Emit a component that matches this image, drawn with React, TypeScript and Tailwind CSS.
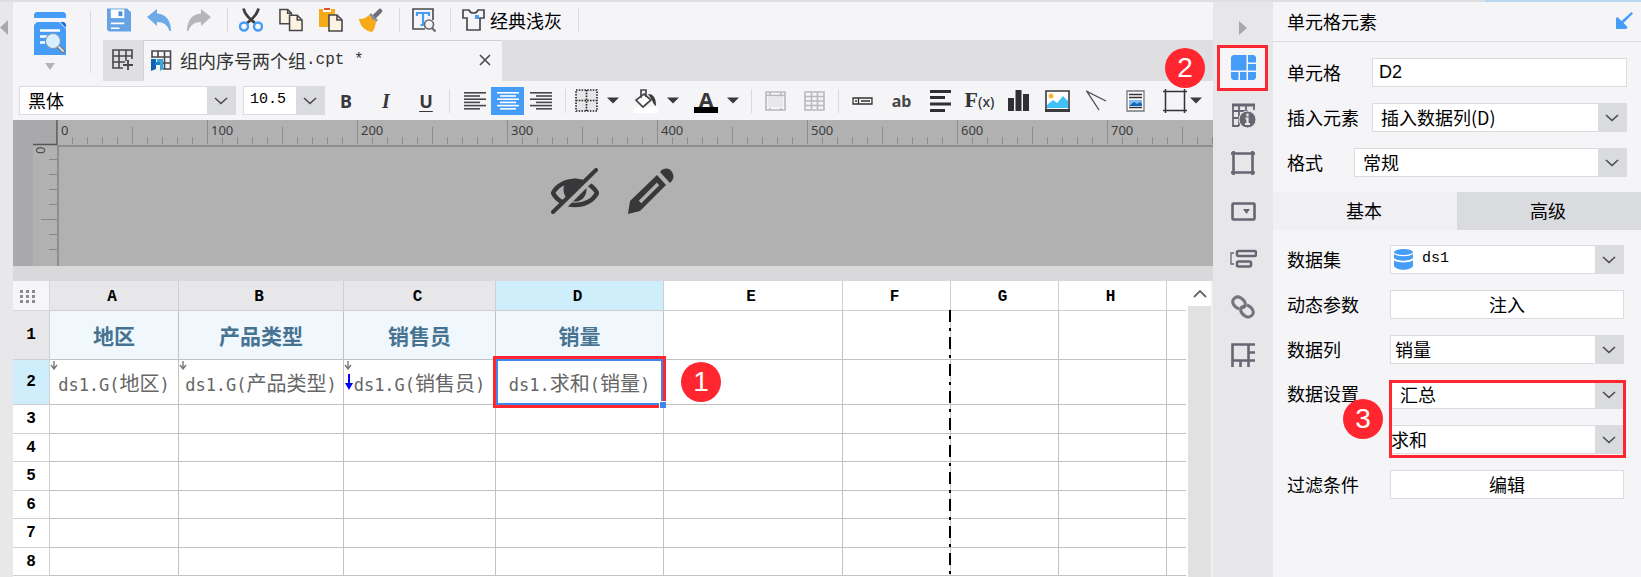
import React from 'react';
import { clsx } from 'clsx';

const mono = "font-['Liberation_Mono','Noto_Sans_CJK_SC',monospace]";

const columns = [
  { name: 'A', width: 'w-[129px]', head: '地区', formula: ['ds1.G(', '地区', ')'] },
  { name: 'B', width: 'w-[165px]', head: '产品类型', formula: ['ds1.G(', '产品类型', ')'] },
  { name: 'C', width: 'w-[152px]', head: '销售员', formula: ['ds1.G(', '销售员', ')'] },
  { name: 'D', width: 'w-[168px]', head: '销量', formula: ['ds1.', '求和', '(', '销量', ')'] },
  { name: 'E', width: 'w-[179px]' },
  { name: 'F', width: 'w-[108px]' },
  { name: 'G', width: 'w-[108px]' },
  { name: 'H', width: 'w-[108px]' },
  { name: '', width: 'w-auto' },
];

const emptyRows = [
  { n: 3, height: 'h-[29px]' },
  { n: 4, height: 'h-7' },
  { n: 5, height: 'h-[29px]' },
  { n: 6, height: 'h-7' },
  { n: 7, height: 'h-[29px]' },
  { n: 8, height: 'h-7' },
];

/* ---------- shared bits ---------- */

const Chevron = () => (
  <svg width="14" height="8" viewBox="0 0 14 8" fill="none" stroke="#4a4a4c" strokeWidth="1.6">
    <path d="M1 1l6 5.500l6-5.500" />
  </svg>
);

const Caret = () => (
  <svg width="12" height="7" viewBox="0 0 12 7" fill="#3a3a3c">
    <path d="M0 0.500h12L6 6.500z" />
  </svg>
);

const Divider = ({ className }: { className?: string }) => (
  <span className={clsx('w-px h-6 bg-[#d9d9dc] shrink-0', className)} />
);

const Badge = ({ n, className }: { n: number; className: string }) => (
  <span
    className={clsx(
      "absolute z-20 w-10 h-10 rounded-full bg-[#ff2630] text-white text-[28px] leading-10 text-center font-['Liberation_Sans',sans-serif]",
      className
    )}
  >
    {n}
  </span>
);

type SelectProps = {
  id: string;
  value: string;
  className?: string;
  textClass?: string;
  icon?: React.ReactNode;
};

const Select = ({ id, value, className, textClass = 'pl-2', icon }: SelectProps) => (
  <div className={clsx('relative flex h-[29px] bg-white border border-[#dcdce0]', className)}>
    {icon && <span className="flex items-center pl-[3px]">{icon}</span>}
    <select id={id} aria-label={value} className={clsx('appearance-none flex-1 min-w-0 pb-[2px] bg-transparent outline-none', textClass)}>
      <option>{value}</option>
    </select>
    <span className="w-7 bg-[#dadbde] flex items-center justify-center pointer-events-none">
      <Chevron />
    </span>
  </div>
);

/* ---------- main toolbar ---------- */

const PreviewIcon = () => (
  <svg width="32" height="43" viewBox="0 0 32 43">
    <path d="M2 0h28l2 2v4H0V2z" fill="#459df8" />
    <path d="M3 10h22l7 7v26H0V13z" fill="#459df8" />
    <path d="M26 10l6 6v-4l-2-2z" fill="#1b74d2" />
    <path d="M6 18.500h20M6 24.500h8M6 30.500h5" stroke="#fff" strokeWidth="2.500" />
    <path d="M24 34l5 5" stroke="#777" strokeWidth="4" strokeLinecap="round" />
    <path d="M24 34l5 5" stroke="#ddd" strokeWidth="2" strokeLinecap="round" />
    <circle cx="19" cy="29" r="7.500" fill="#d9eefc" stroke="#7f9bb5" strokeWidth="1.200" />
  </svg>
);

const SaveIcon = () => (
  <svg width="25" height="24" viewBox="0 0 25 24">
    <path d="M0 0h21l4 4v20H2l-2-2z" fill="#66a3e4" />
    <path d="M4 1h14v9H4z" fill="#fff" />
    <path d="M12 3h4v5h-4z" fill="#4a8fd8" />
    <path d="M4 15.500h14M4 20.500h9" stroke="#fff" strokeWidth="1.600" />
  </svg>
);

const UndoIcon = ({ color, flip }: { color: string; flip?: boolean }) => (
  <svg width="24" height="22" viewBox="0 0 24 22" className={flip ? '-scale-x-100' : ''}>
    <path d="M0 8L10 0v4.500c9 0.500 14 7 14 17.500h-1.500c-2-6-6-9-12.500-9V17z" fill={color} />
  </svg>
);

const CutIcon = () => (
  <svg width="24" height="24" viewBox="0 0 24 24" fill="none">
    <path d="M4.500 0.500c1 5 4 9 12 15M19.500 0.500c-1 5-4 9-12 15" stroke="#3f3f42" strokeWidth="2.800" />
    <circle cx="5" cy="18.500" r="4" stroke="#459df8" strokeWidth="2.400" />
    <circle cx="19" cy="18.500" r="4" stroke="#459df8" strokeWidth="2.400" />
  </svg>
);

const CopyIcon = () => (
  <svg width="25" height="24" viewBox="0 0 25 24" stroke="#48484b" strokeWidth="1.600">
    <path d="M1 1h8l4 4v11H1z" fill="#fdf3e2" />
    <path d="M9 1v4h4" fill="none" />
    <path d="M11 7h8l5 5v11H11z" fill="#fdf3e2" />
    <path d="M19 7v5h5" fill="none" />
  </svg>
);

const PasteIcon = () => (
  <svg width="24" height="24" viewBox="0 0 24 24">
    <path d="M0 1h16v18H0z" fill="#f6aa18" />
    <path d="M4 0h8v4H4z" fill="#fff" />
    <path d="M5 0h6v2H5z" fill="#e0522c" />
    <path d="M10 7h8l5 5v11H10z" fill="#fdf3e2" stroke="#48484b" strokeWidth="1.600" />
    <path d="M18 7v5h5" fill="none" stroke="#48484b" strokeWidth="1.600" />
  </svg>
);

const BrushIcon = () => (
  <svg width="24" height="24" viewBox="0 0 24 24">
    <path d="M21 3l-7 7" stroke="#6b6d78" strokeWidth="4.500" strokeLinecap="round" />
    <path d="M11 6l7 7" stroke="#8a8c96" strokeWidth="2.500" />
    <path d="M10 7l7 7c-1 5-2 8-4 10C6 23 1 18 0 11c4 0 7-1 10-4z" fill="#f6aa18" />
  </svg>
);

const FindIcon = () => (
  <svg width="24" height="24" viewBox="0 0 24 24" fill="none">
    <path d="M13 21H1V1h20v11" stroke="#4a4a4d" strokeWidth="1.600" />
    <path d="M5 8V5h12v3M11 5v12M8.500 17h5" stroke="#459df8" strokeWidth="2.200" />
    <circle cx="17" cy="16.500" r="4.500" fill="#f5f5f8" stroke="#6b6b6e" strokeWidth="1.700" />
    <path d="M20 20l3.500 3.500" stroke="#6b6b6e" strokeWidth="2.200" />
  </svg>
);

const ShirtIcon = () => (
  <svg width="23" height="24" viewBox="0 0 23 24">
    <path d="M1 2h6c1 4 8 4 9 0h6v8h-4v12H5V10H1z" fill="none" stroke="#4a4a4d" strokeWidth="1.700" />
    <path d="M13 7h4v4h-4z" fill="#459df8" />
  </svg>
);

const GridPlusIcon = () => (
  <svg width="22" height="22" viewBox="0 0 22 22" fill="none" stroke="#48484b" strokeWidth="1.600">
    <path d="M11 19H1V1h19v9M1 7h19M1 13h12M7 1v18M14 1v11" />
    <path d="M16 11v10M11 16h10" strokeWidth="1.800" />
  </svg>
);

const ReportIcon = () => (
  <svg width="21" height="21" viewBox="0 0 21 21" fill="none">
    <path d="M1 8V1h18.500v18H12M1 7h18M12 13h8M7 1v6M13.500 1v18" stroke="#48484b" strokeWidth="1.600" />
    <path d="M0 9h5v10l-5 2z" fill="#0d63ad" />
    <path d="M6 9h6v10l-3 2v-8H6z" fill="#35a6e0" />
    <path d="M4 12h5v3H4z" fill="#1a80c8" />
  </svg>
);

const IconButton = ({ label, children, className }: { label: string; children: React.ReactNode; className?: string }) => (
  <button aria-label={label} className={clsx('flex items-center justify-center shrink-0', className)}>
    {children}
  </button>
);

const MainToolbar = () => (
  <div className="flex">
    <div className="w-[77px] pt-[10px] flex justify-center pr-1">
      <button aria-label="预览" className="flex flex-col items-center gap-2 self-start">
        <PreviewIcon />
        <svg width="10" height="7" viewBox="0 0 10 7" fill="#b4b4b7">
          <path d="M0 0h10L5 7z" />
        </svg>
      </button>
    </div>
    <span className="w-px h-[62px] mt-[9px] bg-[#d9d9dc]" />
    <div className="flex-1 min-w-0 pl-3">
      <div className="h-[38px] pl-1 pb-[2px] flex items-center">
        <div className="flex gap-4">
          <IconButton label="保存" className="w-6"><SaveIcon /></IconButton>
          <IconButton label="撤销" className="w-6"><UndoIcon color="#6ea9e8" /></IconButton>
          <IconButton label="重做" className="w-6"><UndoIcon color="#b7b7ba" flip /></IconButton>
        </div>
        <Divider className="ml-4 mr-[11px]" />
        <div className="flex gap-4">
          <IconButton label="剪切" className="w-6"><CutIcon /></IconButton>
          <IconButton label="复制" className="w-6"><CopyIcon /></IconButton>
          <IconButton label="粘贴" className="w-6"><PasteIcon /></IconButton>
          <IconButton label="格式刷" className="w-6"><BrushIcon /></IconButton>
        </div>
        <Divider className="ml-4 mr-3" />
        <IconButton label="查找" className="w-6"><FindIcon /></IconButton>
        <Divider className="ml-[14px] mr-[11px]" />
        <button className="flex items-center gap-[5px]">
          <ShirtIcon />
          <span>经典浅灰</span>
        </button>
        <Divider className="ml-4" />
      </div>
      <div className="h-[41px] flex bg-[#dfdfe1]">
        <IconButton label="新建" className="w-10 pb-[2px]"><GridPlusIcon /></IconButton>
        <div className="w-[359px] bg-[#f5f5f8] border-l border-t border-[#d0d0d4] flex items-center pb-[2px] pl-[7px] pr-[11px] text-[#333]">
          <ReportIcon />
          <span className="ml-2">组内序号两个组</span>
          <span className={clsx('text-[16px] whitespace-pre', mono)}>.cpt *</span>
          <button aria-label="关闭" className="ml-auto">
            <svg width="12" height="12" viewBox="0 0 12 12" stroke="#4a4a4d" strokeWidth="1.600">
              <path d="M1 1l10 10M11 1L1 11" />
            </svg>
          </button>
        </div>
      </div>
    </div>
  </div>
);

/* ---------- format bar ---------- */

const AlignIcon = ({ align, color }: { align: 'left' | 'center' | 'right'; color: string }) => {
  const widths = [22, 16, 22, 16, 22, 16];
  return (
    <svg width="22" height="18" viewBox="0 0 22 18" fill={color}>
      {widths.map((w, i) => (
        <rect
          key={i}
          x={align === 'left' ? 0 : align === 'right' ? 22 - w : (22 - w) / 2}
          y={i * 3.2}
          width={w}
          height="1.600"
        />
      ))}
    </svg>
  );
};

const BordersIcon = () => (
  <svg width="23" height="23" viewBox="0 0 23 23">
    <path d="M1 1h21v21H1z" fill="#e6e6e8" />
    <path d="M1 1h21v21H1zM11.500 1v21M1 11.500h21" fill="none" stroke="#222" strokeWidth="1.600" strokeDasharray="1.500 1.300" />
  </svg>
);

const BucketIcon = () => (
  <svg width="24" height="24" viewBox="0 0 24 24">
    <path d="M0 18h24v6H0z" fill="#fff" />
    <path d="M10 5l7 6-8 7-7-7z" fill="#fff" stroke="#48484b" strokeWidth="1.700" />
    <path d="M7 9V1h5v7" fill="none" stroke="#48484b" strokeWidth="1.700" />
    <path d="M14 5c5 0 8 3 8 12c-2-1-3-3-4-6z" fill="#3a3a3c" />
  </svg>
);

const MergeIcon = () => (
  <svg width="21" height="20" viewBox="0 0 21 20" fill="none" stroke="#b9b9bc" strokeWidth="1.600">
    <path d="M3 6h15v10H3z" fill="#e8e8ea" stroke="none" />
    <path d="M1 1h19v18H1zM1 4.500h19M5 1v3M16 1v3M5 17v2M16 17v2" />
  </svg>
);

const UnmergeIcon = () => (
  <svg width="21" height="20" viewBox="0 0 21 20" fill="none" stroke="#b9b9bc" strokeWidth="1.600">
    <path d="M1 1h19v18H1zM1 5.500h19M1 10h19M1 14.500h19M7.500 1v18M13.500 1v18" />
  </svg>
);

const WidgetIcon = () => (
  <svg width="21" height="8" viewBox="0 0 21 8" fill="none" stroke="#333" strokeWidth="1.300">
    <path d="M1 1h19v6H1zM6.500 1v6M3 4h2M9 4h9" />
  </svg>
);

const TextLinesIcon = () => (
  <svg width="21" height="22" viewBox="0 0 21 22" fill="#303032">
    <path d="M0 0h21v3H0zM0 6h15v3H0zM0 12.500h21v3H0zM0 19h15v3H0z" />
  </svg>
);

const ChartIcon = () => (
  <svg width="21" height="21" viewBox="0 0 21 21" fill="#303032">
    <path d="M0 8h6v13H0zM7.500 0h6v21h-6zM15 4h6v17h-6z" />
  </svg>
);

const ImageIcon = () => (
  <svg width="25" height="22" viewBox="0 0 25 22">
    <path d="M1 1h23v19H1z" fill="#fff" stroke="#3a3a3c" strokeWidth="1.600" />
    <circle cx="6" cy="6" r="2.500" fill="#f8b62c" />
    <path d="M2 18v-3l6-5 4 3 6-7 5 5v7z" fill="#41c1f7" />
    <path d="M0 19h25v3H0z" fill="#3a3a3c" />
  </svg>
);

const SlashIcon = () => (
  <svg width="21" height="21" viewBox="0 0 21 21" fill="none" stroke="#4a4a4d" strokeWidth="1.300">
    <path d="M20 11L1 1.500l12 18.500" />
  </svg>
);

const SubReportIcon = () => (
  <svg width="19" height="22" viewBox="0 0 19 22" fill="none">
    <path d="M1 1h17v20H1z" stroke="#77777b" strokeWidth="1.300" fill="#fff" />
    <path d="M3 4.500h13M3 7.500h13M3 17.500h13" stroke="#333" strokeWidth="1.500" />
    <path d="M3 10h13v6H3z" fill="#7fbcf8" />
    <path d="M3 16l5-4 3 2 3-2 2 2v2z" fill="#1565b5" />
  </svg>
);

const FrameIcon = ({ size, color, weight }: { size: number; color: string; weight: number }) => (
  <svg width={size} height={size} viewBox="0 0 24 24" fill="none" stroke={color} strokeWidth={weight}>
    <path d="M2.500 0v24M21.500 0v24M0 2.500h24M0 21.500h24" />
  </svg>
);

const tools = [
  { label: '控件', icon: <WidgetIcon /> },
  { label: '普通文本', icon: <span className="text-[16px] font-bold text-[#48484b] font-['Noto_Sans',sans-serif]">ab</span> },
  { label: '富文本', icon: <TextLinesIcon /> },
  {
    label: '公式',
    icon: (
      <span className="text-[#333] font-bold text-[22px] font-['Liberation_Serif',serif]">
        F<span className="text-[14px] font-['Noto_Sans',sans-serif] font-medium">(x)</span>
      </span>
    ),
  },
  { label: '图表', icon: <ChartIcon /> },
  { label: '图片', icon: <ImageIcon /> },
  { label: '斜线', icon: <SlashIcon /> },
  { label: '子报表', icon: <SubReportIcon /> },
  { label: '悬浮元素', icon: <FrameIcon size={24} color="#333" weight={1.5} /> },
];

const FormatBar = () => (
  <div className="h-[39px] pl-[6px] flex items-center">
    <Select id="font" value="黑体" className="w-[217px]" />
    <Select id="size" value="10.5" className="w-[82px] ml-[7px]" textClass={clsx('pl-[6px] text-[15px]', mono)} />
    <div className="flex ml-px text-[18px] text-[#38383a]">
      <button className="w-10 font-bold font-['Noto_Sans',sans-serif]">B</button>
      <button className="w-10 font-bold italic text-[20px] font-['Liberation_Serif',serif]">I</button>
      <button className="w-10 font-bold underline underline-offset-3 font-['Noto_Sans',sans-serif]">U</button>
    </div>
    <Divider className="ml-[3px] mr-2" />
    <IconButton label="左对齐" className="w-[33px] h-7"><AlignIcon align="left" color="#48484b" /></IconButton>
    <IconButton label="居中" className="w-[33px] h-7 bg-[#459df8]"><AlignIcon align="center" color="#fff" /></IconButton>
    <IconButton label="右对齐" className="w-[33px] h-7"><AlignIcon align="right" color="#48484b" /></IconButton>
    <Divider className="ml-2 mr-[6px]" />
    <IconButton label="边框" className="w-7"><BordersIcon /></IconButton>
    <IconButton label="边框选项" className="w-[26px] mr-[6px]"><Caret /></IconButton>
    <IconButton label="填充" className="w-7"><BucketIcon /></IconButton>
    <IconButton label="填充选项" className="w-[26px] mr-[6px]"><Caret /></IconButton>
    <button aria-label="字体颜色" className="w-7 flex flex-col items-center">
      <span className="text-[22px] leading-5 h-[18px] font-bold text-[#38383a] font-['Noto_Sans',sans-serif]">A</span>
      <span className="w-6 h-[6px] bg-black" />
    </button>
    <IconButton label="字体颜色选项" className="w-[26px]"><Caret /></IconButton>
    <Divider className="ml-[5px] mr-1" />
    <IconButton label="合并单元格" className="w-[39px]"><MergeIcon /></IconButton>
    <IconButton label="取消合并" className="w-[39px]"><UnmergeIcon /></IconButton>
    <Divider className="ml-1 mr-1" />
    {tools.map((tool) => (
      <IconButton key={tool.label} label={tool.label} className="w-[39px]">{tool.icon}</IconButton>
    ))}
    <IconButton label="更多" className="-ml-1"><Caret /></IconButton>
  </div>
);

/* ---------- ruler + parameter pane ---------- */

// one tick every 15px, a labelled one every ten
const ticks = Array.from({ length: 78 }, (_, i) => i);

const ParameterPane = () => (
  <div className="h-[146px] flex bg-[#b1b1b1]">
    <svg className="w-11 h-full shrink-0" viewBox="0 0 44 146">
      <path d="M0 0h44v25H0zM0 25h20v121H0z" fill="#a9a9ac" />
      <path d="M20 24.500h24M44 0v24" stroke="#555" strokeWidth="1.500" />
      {[1, 2, 3, 4, 5, 6, 7].map((i) => (
        <path key={i} d={`M${i === 5 ? 28 : 36} ${24.5 + i * 15}h8`} stroke="#888" />
      ))}
      <path d="M36 99.500h8" stroke="#888" />
      <text x="-34" y="32" transform="rotate(-90)" fontSize="13" fontFamily="Noto Sans" fill="#444">0</text>
    </svg>
    <div className="flex-1 min-w-0 flex flex-col">
      <svg className="w-full h-[25px] shrink-0 border-l border-[#777]">
        {ticks.map((i) => (
          <path
            key={i}
            d={i % 10 === 0 ? `M${i * 15 - 0.5} 0v24` : i % 5 === 0 ? `M${i * 15 - 0.5} 7v17` : `M${i * 15 - 0.5} 17v7`}
            stroke="#8c8c8c"
          />
        ))}
        {[0, 100, 200, 300, 400, 500, 600, 700].map((n) => (
          <text key={n} x={n * 1.5 + 3} y="15" fontSize="13" fontFamily="Noto Sans" fill="#3c3c3c">{n}</text>
        ))}
      </svg>
      <div className="flex-1 border-t-2 border-l-2 border-[#8e8e8e] pl-[492px] pt-[21px] flex items-start gap-[29px]">
        <button aria-label="隐藏">
          <svg width="48" height="46" viewBox="0 0 48 46" fill="none">
            <path d="M2 25C10 9 38 9 46 25C38 41 10 41 2 25z" stroke="#38383a" strokeWidth="4.500" strokeLinejoin="round" />
            <circle cx="24" cy="22" r="11.500" fill="#38383a" />
            <path d="M5 47L49 3" stroke="#b1b1b1" strokeWidth="5" />
            <path d="M2 44L45 2" stroke="#38383a" strokeWidth="4" strokeLinecap="round" />
          </svg>
        </button>
        <button aria-label="编辑参数面板">
          <svg width="46" height="46" viewBox="0 0 46 46">
            <path d="M0 46l2-13L29 7l9 10L12 43z" fill="#38383a" />
            <path d="M12 34l18-18" stroke="#b1b1b1" strokeWidth="3.500" />
            <path d="M32 4c4-5 10-4 12 0c3 5 1 8-2 11z" fill="#38383a" />
          </svg>
        </button>
      </div>
    </div>
  </div>
);

/* ---------- sheet ---------- */

const Formula = ({ parts }: { parts: string[] }) => (
  <span className="whitespace-nowrap leading-6">
    {parts.map((part, i) => (
      <span key={i} className={/[a-z().]/.test(part) ? "text-[17px] font-['DejaVu_Sans_Mono',monospace]" : 'text-[20px]'}>
        {part}
      </span>
    ))}
  </span>
);

const ExpandArrow = () => (
  <svg className="absolute left-0 top-[1px]" width="8" height="9" viewBox="0 0 8 9" fill="none" stroke="#777" strokeWidth="1.400">
    <path d="M4 0v8M1 4l3 4l3-4" />
  </svg>
);

const cell = 'relative border-r border-b border-[#c2c2c2] p-0 text-center';
const rowHead = clsx('border-r border-b border-[#d0d0d2] p-0 text-[16px]', mono);

const Sheet = () => (
  <div className="flex flex-1">
    <div className="relative flex-1 min-w-0 bg-white pr-[2px]">
      <table className="w-full table-fixed border-separate border-spacing-0 leading-5">
        <colgroup>
          <col className="w-[37px]" />
          {columns.map((c) => <col key={c.name} className={c.width} />)}
        </colgroup>
        <thead>
          <tr className={clsx('h-[30px] text-[16px]', mono)}>
            <th className="bg-[#f6f6f8] border-r border-b border-[#d8d8da] p-0">
              <svg width="16" height="13" viewBox="0 0 16 13" fill="#8c8c8f" className="ml-[7px] mt-px">
                {[0, 6, 12].map((x) => [0, 5, 10].map((y) => <rect key={`${x}-${y}`} x={x} y={y} width="3" height="3" />))}
              </svg>
            </th>
            {columns.map((c) => (
              <th
                key={c.name}
                className={clsx(
                  'border-r border-b border-[#cfcfd1] p-0 pt-[2px] pr-1 font-bold',
                  c.name === 'D' ? 'bg-[#cdeefa]' : c.head ? 'bg-[#e7e7e9]' : 'bg-white',
                  c.name === '' && 'border-r-0'
                )}
              >
                {c.name}
              </th>
            ))}
          </tr>
        </thead>
        <tbody>
          <tr className="h-[49px]">
            <th className={clsx('bg-[#e7e7e9]', rowHead)}>1</th>
            {columns.map((c) => (
              <td key={c.name} className={clsx(cell, 'text-[21px] font-bold text-[#457391]', c.head && 'bg-[#f0f8fe]', c.name === '' && 'border-r-0')}>
                {c.head}
              </td>
            ))}
          </tr>
          <tr className="h-[45px]">
            <th className={clsx('bg-[#cdeefa]', rowHead)}>2</th>
            {columns.map((c) => (
              <td key={c.name} className={clsx(cell, 'pt-1 text-[#666]', c.name === '' && 'border-r-0')}>
                {c.formula && <Formula parts={c.formula} />}
                {c.formula && c.name !== 'D' && <ExpandArrow />}
                {c.name === 'C' && (
                  <svg className="absolute left-[1px] top-[14px]" width="8" height="16" viewBox="0 0 8 16" fill="#00f">
                    <path d="M3 0h2v9h3l-4 7l-4-7h3z" />
                  </svg>
                )}
                {c.name === 'D' && (
                  <div className="absolute z-10 -left-[3px] -right-[3px] -top-1 -bottom-1 border-[3px] border-[#ff2630]">
                    <div className="h-full border-2 border-[#3d87ea]" />
                    <span className="absolute -right-[3px] -bottom-[3px] w-[7px] h-[7px] bg-[#3d87ea] border-l border-t border-white" />
                  </div>
                )}
                {c.name === 'E' && <Badge n={1} className="left-[17px] top-[2px]" />}
              </td>
            ))}
          </tr>
          {emptyRows.map((row) => (
            <tr key={row.n} className={row.height}>
              <th className={clsx('bg-white', rowHead)}>{row.n}</th>
              {columns.map((c) => <td key={c.name} className={clsx(cell, c.name === '' && 'border-r-0')} />)}
            </tr>
          ))}
        </tbody>
      </table>
      {/* page break */}
      <svg className="absolute left-[936px] top-[29px] w-[2px] h-[266px]">
        <path d="M1 0v266" stroke="#000" strokeWidth="2" strokeDasharray="12 6 3 6" />
      </svg>
    </div>
    <div className="w-[25px] bg-[#e1e1e1] border-r-2 border-[#f0f0f2]">
      <button aria-label="向上滚动" className="w-full h-[25px] bg-white flex items-center justify-center">
        <svg width="14" height="8" viewBox="0 0 14 8" fill="none" stroke="#666" strokeWidth="1.800">
          <path d="M1 7l6-6l6 6" />
        </svg>
      </button>
    </div>
  </div>
);

/* ---------- side bar ---------- */

const sideIcons = [
  {
    label: '单元格元素',
    icon: (
      <svg width="25" height="25" viewBox="0 0 25 25" fill="#459df8">
        <path d="M2 0h13.500v15.500H0V2zM17 0h6l2 2v5.500h-8zM17 9h8v6.500h-8zM0 17h7.500v8H2l-2-2zM9 17h6.500v8H9zM17 17h8v6l-2 2h-6z" />
      </svg>
    ),
  },
  {
    label: '单元格属性',
    icon: (
      <svg width="25" height="25" viewBox="0 0 25 25" fill="none">
        <path d="M8 23H2V2h21v5M8 2v21M2 8h15M2 15h7M15 2v6" stroke="#666672" strokeWidth="1.800" />
        <path d="M1 2h23" stroke="#666672" strokeWidth="3" />
        <circle cx="16.500" cy="16.500" r="8.500" fill="#666672" stroke="#e7e7ea" />
        <path d="M16.500 10.500v3M14.500 15.500h2v5M14 21h5" stroke="#e7e7ea" strokeWidth="2.200" />
      </svg>
    ),
  },
  { label: '悬浮元素', icon: <FrameIcon size={24} color="#666672" weight={2.6} /> },
  {
    label: '控件设置',
    icon: (
      <svg width="25" height="19" viewBox="0 0 25 19">
        <rect x="1.500" y="1.500" width="22" height="16" rx="1" fill="none" stroke="#666672" strokeWidth="2.600" />
        <path d="M12 7h7l-3.500 5z" fill="#666672" />
      </svg>
    ),
  },
  {
    label: '条件属性',
    icon: (
      <svg width="27" height="20" viewBox="0 0 27 20" fill="none" stroke="#666672">
        <path d="M4 4H1v11h3" strokeWidth="1.300" />
        <rect x="7" y="2" width="19" height="5" rx="1.500" strokeWidth="2.600" />
        <rect x="7" y="12.500" width="14" height="5" rx="1.500" strokeWidth="2.600" />
      </svg>
    ),
  },
  {
    label: '超级链接',
    icon: (
      <svg width="24" height="24" viewBox="0 0 24 24" fill="none" stroke="#74747f" strokeWidth="3">
        <path d="M8 14C3 12 1 8 2 5c2-3 5-4 8-2c3 2 5 5 4 8c-1 2-3 2-4 1" />
        <path d="M16 10c5 2 7 6 6 9c-2 3-5 4-8 2c-3-2-5-5-4-8c1-2 3-2 4-1" />
      </svg>
    ),
  },
  {
    label: '权限',
    icon: (
      <svg width="25" height="25" viewBox="0 0 25 25" fill="none" stroke="#666672" strokeWidth="2.600">
        <path d="M1.500 24V1.500H24M1.500 17.500H24M17.500 1.500V24M9.500 17.500V24M17.500 9.500H24" />
      </svg>
    ),
  },
];

const SideBar = () => (
  <nav className="relative w-[60px] shrink-0 bg-[#e7e7ea] border-t-2 border-[#dfdfe1]">
    <button aria-label="展开" className="h-[41px] w-full flex items-end justify-center pb-2">
      <svg width="8" height="14" viewBox="0 0 8 14" fill="#a9a9ac">
        <path d="M0 0l8 7l-8 7z" />
      </svg>
    </button>
    {sideIcons.map((item, i) => (
      <IconButton key={item.label} label={item.label} className="relative w-full h-12">
        {i === 0 && <span className="absolute left-1 right-[5px] top-[2px] bottom-0 bg-[#f5f5f8] border-[3px] border-[#ff2630]" />}
        <span className="relative">{item.icon}</span>
      </IconButton>
    ))}
    <Badge n={2} className="-left-12 top-[46px]" />
  </nav>
);

/* ---------- property panel ---------- */

const DatabaseIcon = () => (
  <svg width="19" height="21" viewBox="0 0 19 21" fill="#459df8">
    <ellipse cx="9.500" cy="3" rx="9.500" ry="3" />
    <path d="M0 5c4 3 15 3 19 0v4c-4 3.500-15 3.500-19 0z" />
    <path d="M0 11c4 3 15 3 19 0v6c-3 5-16 5-19 0z" />
    <path d="M0 10.500c4 3 15 3 19 0" fill="none" stroke="#fff" strokeWidth="1.200" />
  </svg>
);

const Field = ({ id, label, labelWidth = 'w-[102px]', children }: { id: string; label: string; labelWidth?: string; children: React.ReactNode }) => (
  <div className="flex items-center h-[29px]">
    <label htmlFor={id} className={clsx('shrink-0 whitespace-nowrap pb-[2px]', labelWidth)}>{label}</label>
    {children}
  </div>
);

const PropertyPanel = () => (
  <aside className="w-[368px] shrink-0 bg-[#f5f5f8]">
    <div className="flex h-[2px] bg-[#dfdfe1]">
      <span className="ml-auto w-[156px] bg-[#b8d8f0]" />
    </div>
    <header className="h-10 pl-[14px] pr-2 pb-[2px] flex items-center justify-between border-b border-[#dcdce0]">
      <h2>单元格元素</h2>
      <button aria-label="停靠">
        <svg width="17" height="17" viewBox="0 0 17 17" fill="#459df8">
          <path d="M15.500 0L17 1.500L7.500 11l4 4l-1 2H0V6l1.500-1l4 4z" />
        </svg>
      </button>
    </header>
    <div className="px-[14px] pt-4 flex flex-col gap-4">
      <Field id="cell" label="单元格" labelWidth="w-[85px]">
        <input id="cell" defaultValue="D2" className="flex-1 min-w-0 h-full bg-white border border-[#dcdce0] px-[6px] outline-none font-['Liberation_Sans',sans-serif]" />
      </Field>
      <Field id="element" label="插入元素" labelWidth="w-[85px]">
        <Select id="element" value="插入数据列(D)" className="flex-1" />
      </Field>
      <Field id="format" label="格式" labelWidth="w-[67px]">
        <Select id="format" value="常规" className="flex-1" />
      </Field>
    </div>
    <div role="tablist" className="flex h-[38px] mt-[15px]">
      <button role="tab" aria-selected="true" className="flex-1 pb-[2px] pr-[2px] bg-[#f0f0f3]">基本</button>
      <button role="tab" aria-selected="false" className="flex-1 pb-[2px] pr-[2px] bg-[#dadbde]">高级</button>
    </div>
    <div className="pl-[14px] pr-[17px] pt-[15px] flex flex-col gap-4">
      <Field id="dataset" label="数据集" labelWidth="w-[103px]">
        <Select id="dataset" value="ds1" className="flex-1" textClass={clsx('pl-[9px] text-[15px]', mono)} icon={<DatabaseIcon />} />
      </Field>
      <Field id="params" label="动态参数" labelWidth="w-[103px]">
        <button id="params" className="flex-1 h-full pb-[2px] bg-white border border-[#dcdce0]">注入</button>
      </Field>
      <Field id="column" label="数据列" labelWidth="w-[103px]">
        <Select id="column" value="销量" className="flex-1" textClass="pl-1" />
      </Field>
      <div className="relative flex items-start">
        <label htmlFor="setting" className="w-[103px] leading-[27px]">数据设置</label>
        <div className="flex-1 flex flex-col gap-4">
          <Select id="setting" value="汇总" textClass="pl-[9px]" />
          <Select id="aggregate" value="求和" textClass="pl-0" />
        </div>
        <span className="absolute left-[102px] -right-[2px] top-0 -bottom-1 border-[3px] border-[#ff2630] pointer-events-none" />
        <Badge n={3} className="left-14 top-[19px]" />
      </div>
      <Field id="filter" label="过滤条件" labelWidth="w-[103px]">
        <button id="filter" className="flex-1 h-full pb-[2px] bg-white border border-[#dcdce0]">编辑</button>
      </Field>
    </div>
  </aside>
);

export default function App() {
  return (
    <div className="flex min-h-screen overflow-hidden bg-[#f5f5f8] text-black text-[18px] leading-6 font-['Noto_Sans_CJK_SC',sans-serif]">
      <div className="w-[13px] shrink-0 bg-[#e8e8ea] border-t-2 border-[#dfdfe1] pt-[18px]">
        <button aria-label="收起" className="block">
          <svg width="8" height="15" viewBox="0 0 8 15" fill="#a9a9ac">
            <path d="M8 0v15L0 7.500z" />
          </svg>
        </button>
      </div>
      <main className="flex-1 min-w-0 flex flex-col border-t-2 border-[#dfdfe1]">
        <MainToolbar />
        <FormatBar />
        <ParameterPane />
        <div className="h-[15px] bg-[#d9d9db]" />
        <Sheet />
      </main>
      <SideBar />
      <PropertyPanel />
    </div>
  );
}
